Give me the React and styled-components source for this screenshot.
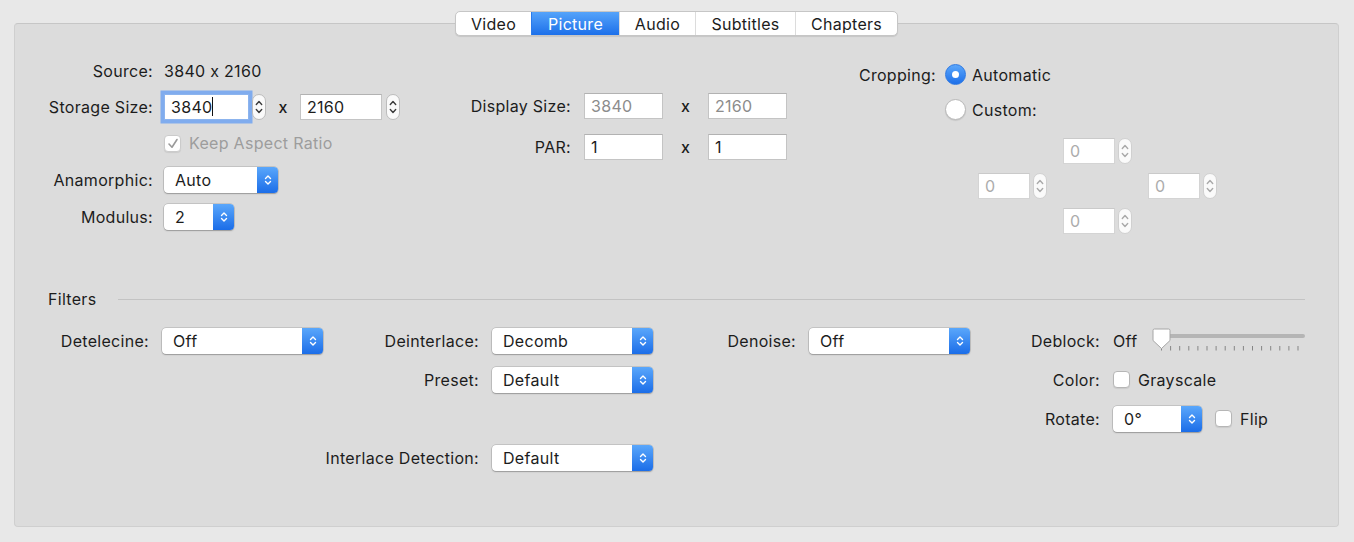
import React from "react";
import styled, { createGlobalStyle, css } from "styled-components";

const GlobalStyle = createGlobalStyle`
  body {
    margin: 0;
    background: #e8e8e8;
    font-family: Inter, "Noto Sans", sans-serif;
    font-size: 16px;
    letter-spacing: 0.3px;
    font-feature-settings: "calt" 0;
    color: #1c1c1c;
  }
`;

const Window = styled.div`
  width: 1354px;
  height: 542px;
  box-sizing: border-box;
  padding: 11px 15px 0 14px;
`;

const TabBar = styled.div`
  position: relative;
  z-index: 1;
  display: flex;
  justify-content: center;
  margin-bottom: -13px;
`;

const Segmented = styled.div`
  display: flex;
  height: 25px;
  box-sizing: border-box;
  background: #fff;
  border: 1px solid #c6c6c6;
  border-radius: 5px;
  box-shadow: 0 1px 1px rgba(0, 0, 0, 0.1);
  overflow: hidden;
`;

const Tab = styled.div`
  width: ${(p) => p.$w}px;
  box-sizing: border-box;
  display: flex;
  align-items: center;
  justify-content: center;
  border-left: 1px solid #dcdcdc;
  &:first-child {
    border-left: none;
  }
  ${(p) =>
    p.$active &&
    css`
      background: linear-gradient(#55a3fa, #1c70ea);
      border-left-color: #2a7bec;
      color: #fff;
    `}
`;

const Panel = styled.div`
  height: 504px;
  box-sizing: border-box;
  background: #dcdcdc;
  border: 1px solid #cfcfcf;
  border-top-color: #c6c6c6;
  border-radius: 4px;
  padding-top: 29px;
`;

const TopSection = styled.div`
  display: grid;
  grid-template-columns: 400px 420px 1fr;
  height: 236px;
`;

const FormGrid = styled.div`
  display: grid;
  grid-template-columns: ${(p) => p.$label}px auto;
  grid-template-rows: ${(p) => p.$rows || "none"};
  grid-auto-rows: ${(p) => p.$row || 36}px;
  column-gap: ${(p) => p.$gap || 11}px;
  row-gap: ${(p) => p.$rowGap || 0}px;
  align-items: center;
  justify-items: start;
  align-content: start;
  padding-top: ${(p) => p.$top || 0}px;
`;

const Label = styled.div`
  justify-self: end;
  white-space: nowrap;
  ${(p) => p.$col && css`grid-column: ${p.$col};`}
`;

const Inline = styled.div`
  display: flex;
  align-items: center;
  gap: ${(p) => p.$gap || 0}px;
  white-space: nowrap;
  ${(p) => p.$col && css`grid-column: ${p.$col};`}
`;

const Times = styled.span`
  width: ${(p) => p.$w}px;
  text-align: center;
  font-weight: 500;
`;

const Field = styled.div`
  width: ${(p) => p.$w}px;
  height: 26px;
  box-sizing: border-box;
  padding: 0 6px;
  display: flex;
  align-items: center;
  background: #fff;
  border: 1px solid ${(p) => (p.$faint ? "#d4d4d4" : "#c4c4c4")};
  border-top-color: ${(p) => (p.$faint ? "#cacaca" : "#b2b2b2")};
  color: ${(p) => (p.$faint ? "#acacac" : p.$disabled ? "#8c8c8c" : "#1c1c1c")};
  ${(p) =>
    p.$focused &&
    css`
      border-color: #8cb4ee;
      box-shadow: 0 0 0 3.5px #80acee;
    `}
`;

const Caret = styled.span`
  width: 1px;
  height: 19px;
  background: #111;
`;

const StepperBox = styled.div`
  width: 14px;
  height: 26px;
  box-sizing: border-box;
  border: 1px solid ${(p) => (p.$faint ? "#d0d0d0" : "#bcbcbc")};
  border-radius: 7px;
  background: #fafafa;
  display: flex;
  align-items: center;
  justify-content: center;
  color: ${(p) => (p.$faint ? "#a9a9a9" : "#3a3a3a")};
`;

const PopupBox = styled.div`
  width: ${(p) => p.$w}px;
  height: 26px;
  box-sizing: border-box;
  display: flex;
  background: #fff;
  border-radius: 4px;
  box-shadow: 0 0 0 0.5px rgba(0, 0, 0, 0.22), 0 1px 1.5px rgba(0, 0, 0, 0.22);
  overflow: hidden;
`;

const PopupText = styled.div`
  flex: 1;
  padding-left: 11px;
  display: flex;
  align-items: center;
`;

const PopupArrow = styled.div`
  width: 21px;
  display: flex;
  align-items: center;
  justify-content: center;
  background: linear-gradient(#5aa7fb, #1b6de8);
  color: #fff;
`;

const Box = styled.div`
  width: 17px;
  height: 17px;
  box-sizing: border-box;
  border-radius: 4px;
  background: #fff;
  border: 1px solid ${(p) => (p.$disabled ? "#cbcbcb" : "#b6b6b6")};
  box-shadow: 0 1px 1px rgba(0, 0, 0, 0.08);
  display: flex;
  align-items: center;
  justify-content: center;
`;

const CheckText = styled.span`
  color: ${(p) => (p.$disabled ? "#9d9d9d" : "#1c1c1c")};
`;

const RadioDot = styled.div`
  width: 21px;
  height: 21px;
  box-sizing: border-box;
  border-radius: 50%;
  display: flex;
  align-items: center;
  justify-content: center;
  ${(p) =>
    p.$on
      ? css`
          background: linear-gradient(#5ba7fb, #1d6fe9);
          border: 1px solid #2d78e2;
          &::after {
            content: "";
            width: 7px;
            height: 7px;
            border-radius: 50%;
            background: #fff;
          }
        `
      : css`
          background: #fff;
          border: 1px solid #b8b8b8;
          box-shadow: 0 1px 1px rgba(0, 0, 0, 0.1);
        `}
`;

const RightCol = styled.div`
  display: flex;
  flex-direction: column;
`;

const CropGrid = styled.div`
  display: grid;
  grid-template-columns: repeat(3, 70px);
  grid-auto-rows: 35px;
  column-gap: 15px;
  align-items: center;
  margin: 6px 0 0 143px;
`;

const FiltersHeader = styled.div`
  display: flex;
  align-items: center;
  gap: 22px;
  height: 20px;
  padding: 0 33px;
  &::after {
    content: "";
    flex: 1;
    height: 1px;
    background: #c3c3c3;
  }
`;

const FilterGrid = styled.div`
  display: grid;
  grid-template-columns: 134px 161px 143px 161px 130px 161px 117px 192px;
  grid-auto-rows: 39px;
  column-gap: 13px;
  align-items: center;
  justify-items: start;
  margin-top: 12px;
`;

const Chevrons = ({ tall }) => (
  <svg width="8" height={tall ? 16 : 12} viewBox={tall ? "0 0 8 16" : "0 0 8 12"} fill="none" stroke="currentColor" strokeWidth="1.4" strokeLinecap="round" strokeLinejoin="round">
    {tall ? (
      <>
        <path d="M1.3 5.5L4 2.6l2.7 2.9" />
        <path d="M1.3 10.5L4 13.4l2.7-2.9" />
      </>
    ) : (
      <>
        <path d="M1.5 4.5L4 2l2.5 2.5" />
        <path d="M1.5 7.5L4 10l2.5-2.5" />
      </>
    )}
  </svg>
);

const Stepper = ({ faint }) => (
  <StepperBox $faint={faint}>
    <Chevrons tall />
  </StepperBox>
);

const Popup = ({ w, value }) => (
  <PopupBox $w={w}>
    <PopupText>{value}</PopupText>
    <PopupArrow>
      <Chevrons />
    </PopupArrow>
  </PopupBox>
);

const Checkbox = ({ label, checked, disabled }) => (
  <Inline $gap={8}>
    <Box $disabled={disabled}>
      {checked && (
        <svg width="12" height="11" viewBox="0 0 12 11" fill="none" stroke={disabled ? "#9a9a9a" : "#222"} strokeWidth="1.6" strokeLinecap="round" strokeLinejoin="round">
          <path d="M2 6l3 3.2L10 1.5" />
        </svg>
      )}
    </Box>
    <CheckText $disabled={disabled}>{label}</CheckText>
  </Inline>
);

const Radio = ({ on, label }) => (
  <Inline $gap={6}>
    <RadioDot $on={on} />
    {label}
  </Inline>
);

const CropField = ({ col }) => (
  <Inline $gap={3} $col={col}>
    <Field $w={52} $faint>0</Field>
    <Stepper faint />
  </Inline>
);

const ticks = Array.from({ length: 16 }, (_, i) => 11.5 + i * 9.1);

const Slider = () => (
  <svg width="156" height="26" viewBox="0 0 156 26">
    <rect x="4" y="6" width="151" height="4" rx="2" fill="#b5b5b5" />
    {ticks.map((x) => (
      <line key={x} x1={x} x2={x} y1="18" y2="22.5" stroke="#858585" strokeWidth="1" />
    ))}
    <path d="M3 2.5Q3 1 4.5 1H18.5Q20 1 20 2.5V12.5L11.5 20.5L3 12.5Z" fill="#fff" stroke="#a6a6a6" strokeWidth="1" />
  </svg>
);

const tabs = [
  ["Video", 75],
  ["Picture", 88],
  ["Audio", 76],
  ["Subtitles", 100],
  ["Chapters", 102],
];

export default function App() {
  return (
    <Window>
      <GlobalStyle />
      <TabBar>
        <Segmented>
          {tabs.map(([name, w]) => (
            <Tab key={name} $w={w} $active={name === "Picture"}>
              {name}
            </Tab>
          ))}
        </Segmented>
      </TabBar>

      <Panel>
        <TopSection>
          <FormGrid $label={138} $gap={11} $rows="36px 35px 38px 36px 38px">
            <Label>Source:</Label>
            <span>3840 x 2160</span>

            <Label>Storage Size:</Label>
            <Inline>
              <Field $w={85} $focused>
                3840
                <Caret />
              </Field>
              <Inline style={{ marginLeft: 3 }}>
                <Stepper />
              </Inline>
              <Times $w={34}>x</Times>
              <Field $w={82}>2160</Field>
              <Inline style={{ marginLeft: 4 }}>
                <Stepper />
              </Inline>
            </Inline>

            <Label />
            <Checkbox label="Keep Aspect Ratio" checked disabled />

            <Label>Anamorphic:</Label>
            <Popup w={114} value="Auto" />

            <Label>Modulus:</Label>
            <Popup w={70} value="2" />
          </FormGrid>

          <FormGrid $label={156} $gap={13} $rowGap={5} $top={35}>
            <Label>Display Size:</Label>
            <Inline>
              <Field $w={79} $disabled>3840</Field>
              <Times $w={45}>x</Times>
              <Field $w={79} $disabled>2160</Field>
            </Inline>

            <Label>PAR:</Label>
            <Inline>
              <Field $w={79}>1</Field>
              <Times $w={45}>x</Times>
              <Field $w={79}>1</Field>
            </Inline>
          </FormGrid>

          <RightCol>
            <FormGrid $label={101} $gap={9} $row={35} $top={4}>
              <Label>Cropping:</Label>
              <Radio on label="Automatic" />
              <Label />
              <Radio label="Custom:" />
            </FormGrid>
            <CropGrid>
              <CropField col={2} />
              <CropField col={1} />
              <CropField col={3} />
              <CropField col={2} />
            </CropGrid>
          </RightCol>
        </TopSection>

        <FiltersHeader>Filters</FiltersHeader>

        <FilterGrid>
          <Label $col={1}>Detelecine:</Label>
          <Popup w={161} value="Off" />
          <Label $col={3}>Deinterlace:</Label>
          <Popup w={161} value="Decomb" />
          <Label $col={5}>Denoise:</Label>
          <Popup w={161} value="Off" />
          <Label $col={7}>Deblock:</Label>
          <Inline $gap={13}>
            Off
            <Slider />
          </Inline>

          <Label $col={3}>Preset:</Label>
          <Popup w={161} value="Default" />
          <Label $col={7}>Color:</Label>
          <Checkbox label="Grayscale" />

          <Label $col={7}>Rotate:</Label>
          <Inline $gap={13}>
            <Popup w={89} value="0°" />
            <Checkbox label="Flip" />
          </Inline>

          <Label $col={3}>Interlace Detection:</Label>
          <Popup w={161} value="Default" />
        </FilterGrid>
      </Panel>
    </Window>
  );
}
